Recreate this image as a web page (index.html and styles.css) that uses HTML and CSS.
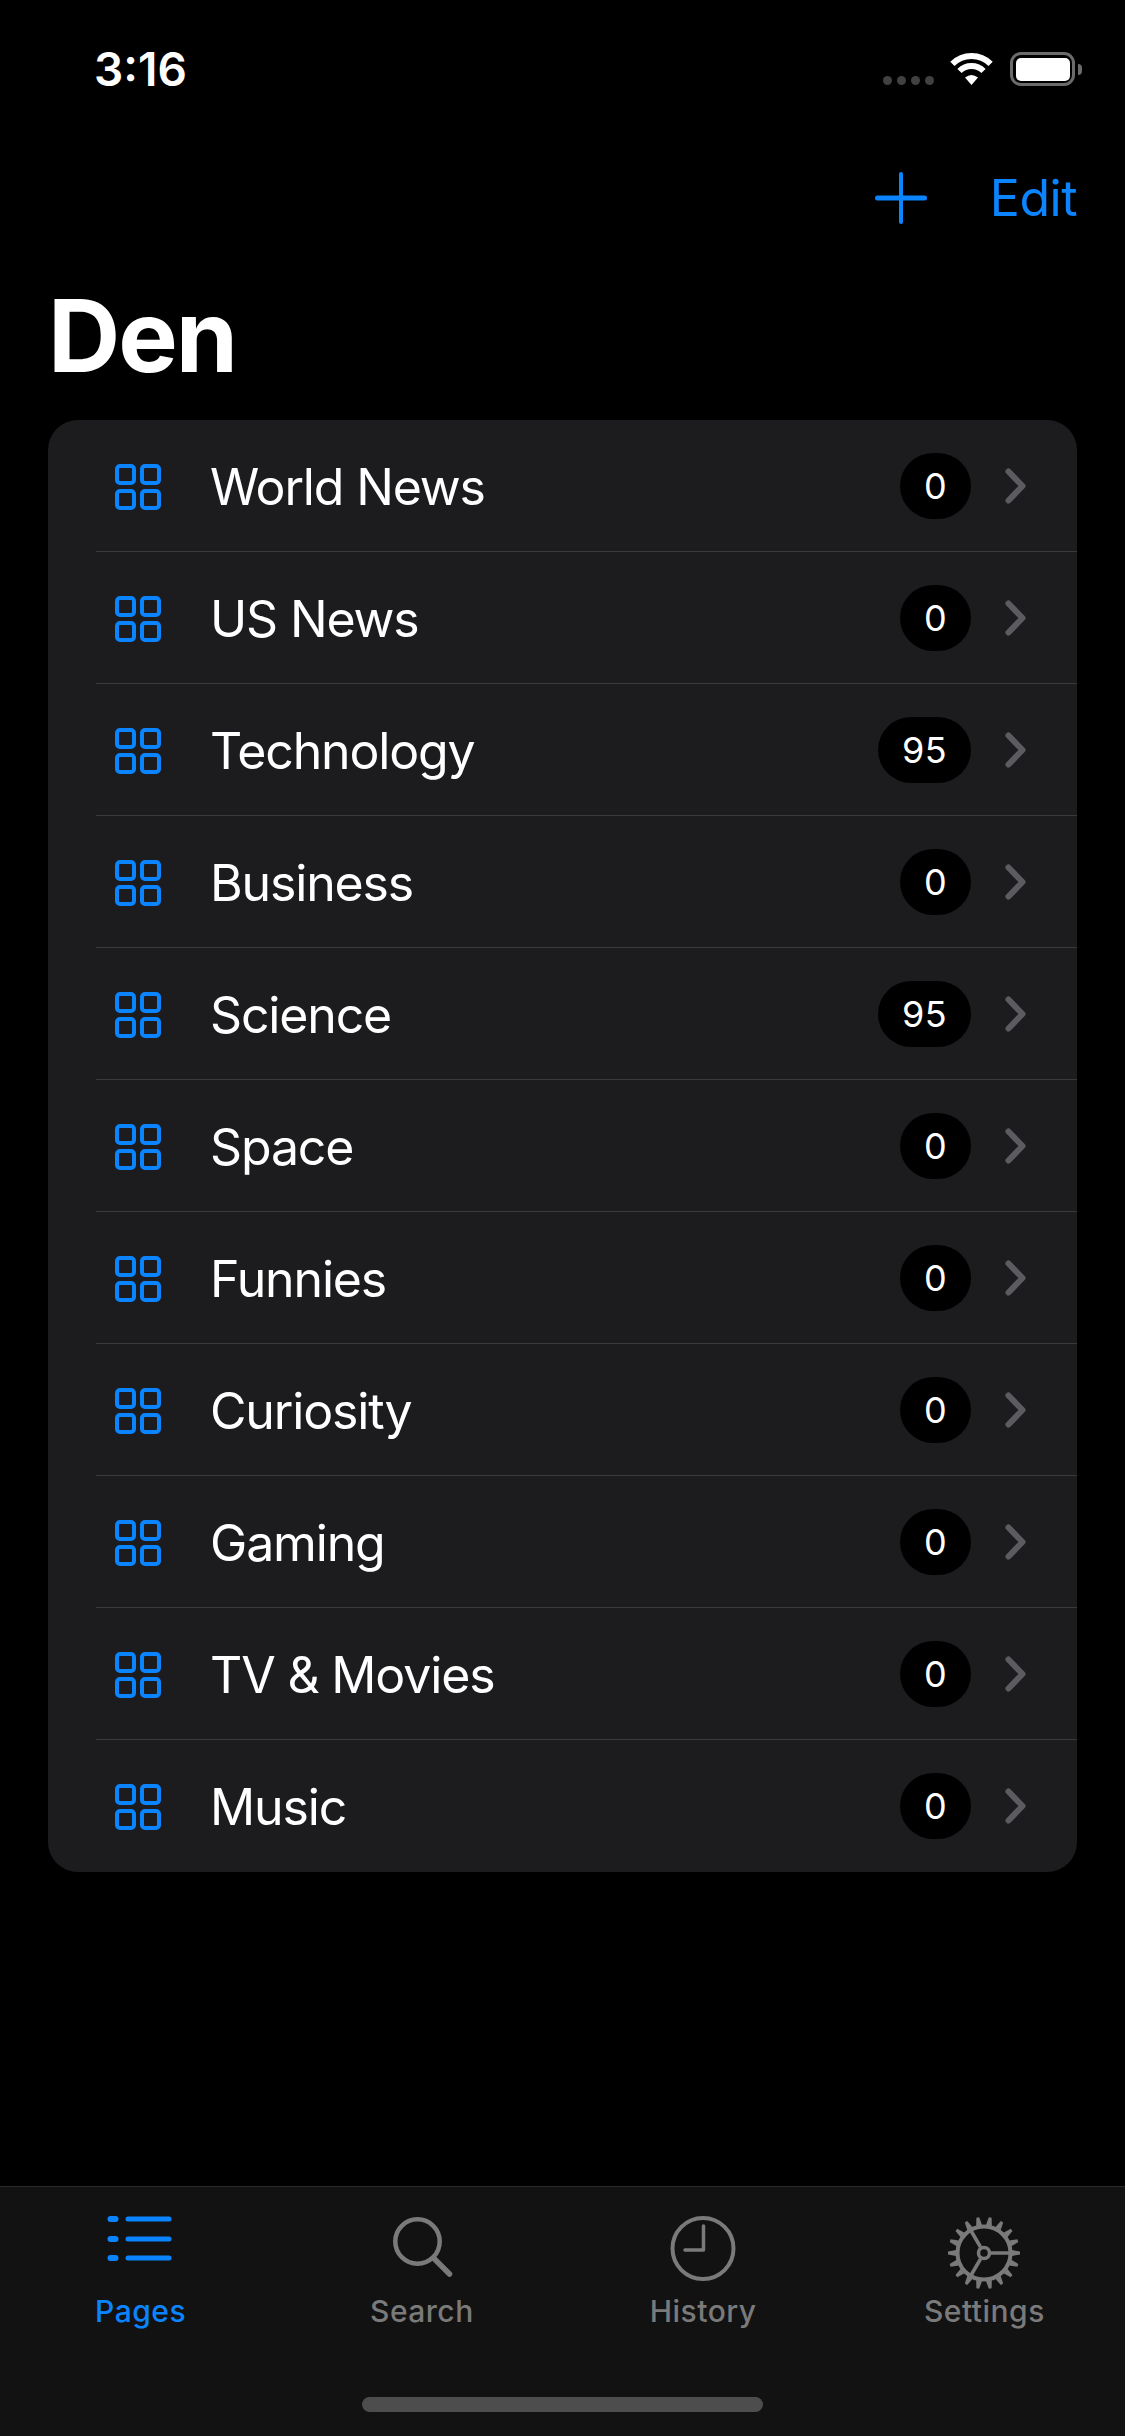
FILE: index.html
```html
<!DOCTYPE html>
<html lang="en">
<head>
<meta charset="UTF-8" />
<meta name="viewport" content="width=device-width, initial-scale=1" />
<title>Den</title>
<link rel="stylesheet" href="styles.css">
</head>
<body>
  <svg width="0" height="0" class="defs">
    <defs>
      <symbol id="grid" viewBox="0 0 46 46">
        <g fill="none" stroke="#0a84ff" stroke-width="4">
          <rect x="2" y="2" width="17" height="17" rx="3" />
          <rect x="27" y="2" width="17" height="17" rx="3" />
          <rect x="2" y="27" width="17" height="17" rx="3" />
          <rect x="27" y="27" width="17" height="17" rx="3" />
        </g>
      </symbol>
      <symbol id="chevron" viewBox="0 0 21 36">
        <path d="M3.5 3.5 L17.5 18 L3.5 32.5" fill="none" stroke="#5c5c60" stroke-width="6" stroke-linecap="round" stroke-linejoin="round" />
      </symbol>
      <path id="tooth" d="M-3 -28 L-1.4 -36 L1.4 -36 L3 -28 Z" fill="#7a7a7a" />
    </defs>
  </svg>

  <div class="status-bar">
    <span class="time">3:16</span>
    <div class="status-icons">
      <div class="signal"><i></i><i></i><i></i><i></i></div>
      <svg class="wifi" width="45" height="33" viewBox="0 0 45 33">
        <g fill="none" stroke="#fff" stroke-width="6">
          <path d="M3.4 11.9 A27 27 0 0 1 41.6 11.9" />
          <path d="M10.5 19 A17 17 0 0 1 34.5 19" />
        </g>
        <path d="M16 25.5 Q22.5 20.5 29 25.5 L22.5 33 Z" fill="#fff" />
      </svg>
      <div class="battery"><div class="battery-level"></div></div>
      <div class="battery-nub"></div>
    </div>
  </div>

  <div class="nav-bar">
    <svg class="plus" width="52" height="52" viewBox="0 0 52 52">
      <path d="M26 2 V50" stroke="#0a84ff" stroke-width="4" stroke-linecap="round" />
      <path d="M2.5 26 H49.5" stroke="#0a84ff" stroke-width="5" stroke-linecap="round" />
    </svg>
    <span class="edit">Edit</span>
  </div>

  <h1 class="title">Den</h1>

  <div class="card">
    <div class="row"><div class="row-inner">
      <svg class="row-icon"><use href="#grid" /></svg>
      <span class="row-name">World News</span>
      <span class="badge">0</span>
      <svg class="chevron"><use href="#chevron" /></svg>
    </div></div>
    <div class="row"><div class="row-inner">
      <svg class="row-icon"><use href="#grid" /></svg>
      <span class="row-name">US News</span>
      <span class="badge">0</span>
      <svg class="chevron"><use href="#chevron" /></svg>
    </div></div>
    <div class="row"><div class="row-inner">
      <svg class="row-icon"><use href="#grid" /></svg>
      <span class="row-name">Technology</span>
      <span class="badge">95</span>
      <svg class="chevron"><use href="#chevron" /></svg>
    </div></div>
    <div class="row"><div class="row-inner">
      <svg class="row-icon"><use href="#grid" /></svg>
      <span class="row-name">Business</span>
      <span class="badge">0</span>
      <svg class="chevron"><use href="#chevron" /></svg>
    </div></div>
    <div class="row"><div class="row-inner">
      <svg class="row-icon"><use href="#grid" /></svg>
      <span class="row-name">Science</span>
      <span class="badge">95</span>
      <svg class="chevron"><use href="#chevron" /></svg>
    </div></div>
    <div class="row"><div class="row-inner">
      <svg class="row-icon"><use href="#grid" /></svg>
      <span class="row-name">Space</span>
      <span class="badge">0</span>
      <svg class="chevron"><use href="#chevron" /></svg>
    </div></div>
    <div class="row"><div class="row-inner">
      <svg class="row-icon"><use href="#grid" /></svg>
      <span class="row-name">Funnies</span>
      <span class="badge">0</span>
      <svg class="chevron"><use href="#chevron" /></svg>
    </div></div>
    <div class="row"><div class="row-inner">
      <svg class="row-icon"><use href="#grid" /></svg>
      <span class="row-name">Curiosity</span>
      <span class="badge">0</span>
      <svg class="chevron"><use href="#chevron" /></svg>
    </div></div>
    <div class="row"><div class="row-inner">
      <svg class="row-icon"><use href="#grid" /></svg>
      <span class="row-name">Gaming</span>
      <span class="badge">0</span>
      <svg class="chevron"><use href="#chevron" /></svg>
    </div></div>
    <div class="row"><div class="row-inner">
      <svg class="row-icon"><use href="#grid" /></svg>
      <span class="row-name">TV &amp; Movies</span>
      <span class="badge">0</span>
      <svg class="chevron"><use href="#chevron" /></svg>
    </div></div>
    <div class="row"><div class="row-inner">
      <svg class="row-icon"><use href="#grid" /></svg>
      <span class="row-name">Music</span>
      <span class="badge">0</span>
      <svg class="chevron"><use href="#chevron" /></svg>
    </div></div>
  </div>

  <div class="tab-bar">
    <div class="tabs">
      <div class="tab active">
        <svg class="tab-icon" viewBox="0 0 76 76">
          <g fill="#0a84ff">
            <rect x="4.5" y="2" width="11" height="6" rx="3" />
            <rect x="4.5" y="22" width="11" height="6" rx="3" />
            <rect x="4.5" y="41" width="11" height="6" rx="3" />
            <rect x="22.5" y="2.5" width="46" height="5" rx="2.5" />
            <rect x="22.5" y="22.5" width="46" height="5" rx="2.5" />
            <rect x="22.5" y="41.5" width="46" height="5" rx="2.5" />
          </g>
        </svg>
        <span class="tab-label">Pages</span>
      </div>
      <div class="tab">
        <svg class="tab-icon" viewBox="0 0 76 76">
          <circle cx="33.5" cy="27.5" r="22.2" fill="none" stroke="#7a7a7a" stroke-width="4.5" />
          <path d="M49.5 44 L65.5 60" stroke="#7a7a7a" stroke-width="5.5" stroke-linecap="round" />
        </svg>
        <span class="tab-label">Search</span>
      </div>
      <div class="tab">
        <svg class="tab-icon" viewBox="0 0 76 76">
          <circle cx="38" cy="34.5" r="30.5" fill="none" stroke="#7a7a7a" stroke-width="4" />
          <path d="M38.5 12 V36 H20" fill="none" stroke="#7a7a7a" stroke-width="3.5" stroke-linecap="round" stroke-linejoin="round" />
        </svg>
        <span class="tab-label">History</span>
      </div>
      <div class="tab">
        <svg class="tab-icon" viewBox="0 0 76 76">
          <g transform="translate(38 39)">
            <circle r="26.5" fill="none" stroke="#7a7a7a" stroke-width="4" />
            <circle r="5.5" fill="none" stroke="#7a7a7a" stroke-width="3.5" />
            <path d="M7 0 H27 M-3.5 -6 L-14 -24 M-3.5 6 L-14 24" stroke="#7a7a7a" stroke-width="3.5" />
            <use href="#tooth" transform="rotate(10)" />
            <use href="#tooth" transform="rotate(30)" />
            <use href="#tooth" transform="rotate(50)" />
            <use href="#tooth" transform="rotate(70)" />
            <use href="#tooth" transform="rotate(90)" />
            <use href="#tooth" transform="rotate(110)" />
            <use href="#tooth" transform="rotate(130)" />
            <use href="#tooth" transform="rotate(150)" />
            <use href="#tooth" transform="rotate(170)" />
            <use href="#tooth" transform="rotate(190)" />
            <use href="#tooth" transform="rotate(210)" />
            <use href="#tooth" transform="rotate(230)" />
            <use href="#tooth" transform="rotate(250)" />
            <use href="#tooth" transform="rotate(270)" />
            <use href="#tooth" transform="rotate(290)" />
            <use href="#tooth" transform="rotate(310)" />
            <use href="#tooth" transform="rotate(330)" />
            <use href="#tooth" transform="rotate(350)" />
          </g>
        </svg>
        <span class="tab-label">Settings</span>
      </div>
    </div>
    <div class="home-indicator"></div>
  </div>
</body>
</html>
```

FILE: styles.css
```css
* {
  box-sizing: border-box;
}

body {
  margin: 0;
  width: 1125px;
  height: 2436px;
  overflow: hidden;
  background: #000;
  color: #fff;
  font-family: Inter, "Noto Sans", sans-serif;
  display: flex;
  flex-direction: column;
}

.defs {
  position: absolute;
}

/* Status bar */
.status-bar {
  height: 100px;
  padding: 46px 43px 0 94px;
  display: flex;
  justify-content: space-between;
}

.time {
  font-size: 46px;
  font-weight: 600;
  line-height: 46px;
}

.status-icons {
  display: flex;
  align-items: flex-start;
  padding-top: 6px;
}

.signal {
  display: flex;
  gap: 5px;
  margin-top: 24px;
  margin-right: 15px;
}

.signal i {
  width: 9px;
  height: 9px;
  border-radius: 50%;
  background: #414141;
}

.wifi {
  margin-right: 16px;
}

.battery {
  width: 65px;
  height: 34px;
  border: 3.5px solid #6b6b6b;
  border-radius: 11px;
  padding: 2.5px;
}

.battery-level {
  width: 100%;
  height: 100%;
  background: #fff;
  border-radius: 5px;
}

.battery-nub {
  width: 4px;
  height: 11px;
  margin: 12px 0 0 3px;
  background: #6b6b6b;
  border-radius: 0 4px 4px 0;
}

/* Nav */
.nav-bar {
  height: 100px;
  padding: 72px 48px 0 0;
  display: flex;
  justify-content: flex-end;
  align-items: flex-start;
  gap: 63px;
}

.edit {
  color: #0a84ff;
  font-size: 50px;
  font-weight: 375;
  line-height: 50px;
  margin-top: 1px;
  letter-spacing: -0.5px;
}

.title {
  margin: 76px 0 0 48px;
  height: 144px;
  font-size: 100px;
  line-height: 120px;
  font-weight: 700;
  letter-spacing: -2px;
}

/* List */
.card {
  margin: 0 48px;
  background: #1c1c1e;
  border-radius: 30px;
}

.row {
  padding-left: 48px;
}

.row-inner {
  height: 132px;
  padding-right: 51px;
  display: flex;
  align-items: center;
  border-bottom: 1.5px solid #3a3a3c;
}

.row:last-child .row-inner {
  border-bottom: none;
}

.row-icon {
  width: 46px;
  height: 46px;
  margin: 2px 49px 0 19px;
  flex: none;
}

.row-name {
  flex: 1;
  font-size: 50px;
  font-weight: 375;
  letter-spacing: -1.15px;
  padding-top: 2px;
}

.badge {
  min-width: 71px;
  height: 66px;
  padding: 0 24px;
  border-radius: 33px;
  background: #000;
  font-size: 36px;
  font-weight: 375;
  letter-spacing: 0.4px;
  line-height: 66px;
  text-align: center;
}

.chevron {
  width: 21px;
  height: 36px;
  margin-left: 34px;
  flex: none;
}

/* Tabs */
.tab-bar {
  margin-top: auto;
  height: 250px;
  background: #121212;
  border-top: 1.5px solid #2b2b2b;
  display: flex;
  flex-direction: column;
  align-items: center;
}

.tabs {
  width: 100%;
  height: 210px;
  padding-top: 27px;
  display: grid;
  grid-template-columns: repeat(4, 1fr);
}

.tab {
  display: flex;
  flex-direction: column;
  align-items: center;
  color: #7a7a7a;
}

.tab.active {
  color: #0a84ff;
}

.tab-icon {
  width: 76px;
  height: 76px;
}

.tab-label {
  font-size: 30px;
  line-height: 36px;
  font-weight: 450;
  letter-spacing: 0.5px;
  margin-top: 3px;
}

.home-indicator {
  width: 401px;
  height: 15px;
  border-radius: 8px;
  background: #4d4d4d;
}
```
